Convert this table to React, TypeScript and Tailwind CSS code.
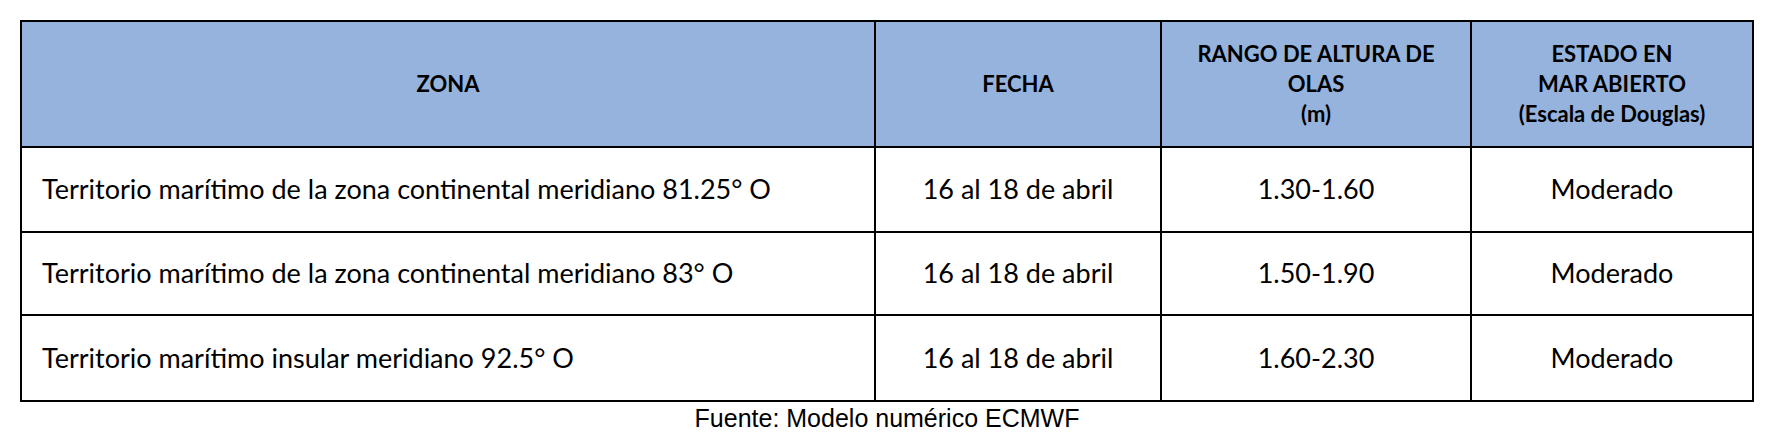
import React from 'react';

type Row = { zona: string; fecha: string; rango: string; estado: string };

const rows: Row[] = [
  { zona: 'Territorio marítimo de la zona continental meridiano 81.25° O', fecha: '16 al 18 de abril', rango: '1.30-1.60', estado: 'Moderado' },
  { zona: 'Territorio marítimo de la zona continental meridiano 83° O', fecha: '16 al 18 de abril', rango: '1.50-1.90', estado: 'Moderado' },
  { zona: 'Territorio marítimo insular meridiano 92.5° O', fecha: '16 al 18 de abril', rango: '1.60-2.30', estado: 'Moderado' },
];

const rowHeights = ['h-[83px]', 'h-[81px]', 'h-[84px]'];

export default function App() {
  return (
    <div className="w-[1772px] h-[446px] bg-white pt-[20px] pl-[20px] font-['Lato',sans-serif] text-black">
      <div className="w-[1734px]">
        <div className="grid grid-cols-[852px_284px_308px_280px] gap-[2px] bg-black p-[2px]">
          {/* header */}
          <div className="h-[124px] bg-[#95b3dd] flex items-center justify-center font-bold text-[22px] leading-[30px] text-center">
            ZONA
          </div>
          <div className="h-[124px] bg-[#95b3dd] flex items-center justify-center font-bold text-[22px] leading-[30px] text-center">
            FECHA
          </div>
          <div className="h-[124px] bg-[#95b3dd] flex items-center justify-center font-bold text-[22px] leading-[30px] text-center">
            <div>
              RANGO DE ALTURA DE
              <br />
              OLAS
              <br />
              (m)
            </div>
          </div>
          <div className="h-[124px] bg-[#95b3dd] flex items-center justify-center font-bold text-[22px] leading-[30px] text-center">
            <div>
              ESTADO EN
              <br />
              MAR ABIERTO
              <br />
              (Escala de Douglas)
            </div>
          </div>

          {rows.map((r, i) => (
            <React.Fragment key={i}>
              <div className={`${rowHeights[i]} bg-white flex items-center pl-[20px] text-[27px]`}>{r.zona}</div>
              <div className={`${rowHeights[i]} bg-white flex items-center justify-center text-[27px]`}>{r.fecha}</div>
              <div className={`${rowHeights[i]} bg-white flex items-center justify-center text-[27px]`}>{r.rango}</div>
              <div className={`${rowHeights[i]} bg-white flex items-center justify-center text-[27px]`}>{r.estado}</div>
            </React.Fragment>
          ))}
        </div>
        <div className="mt-[4px] text-center font-['Liberation_Sans',Arial,sans-serif] text-[25px] leading-[25px]">
          Fuente: Modelo numérico ECMWF
        </div>
      </div>
    </div>
  );
}
